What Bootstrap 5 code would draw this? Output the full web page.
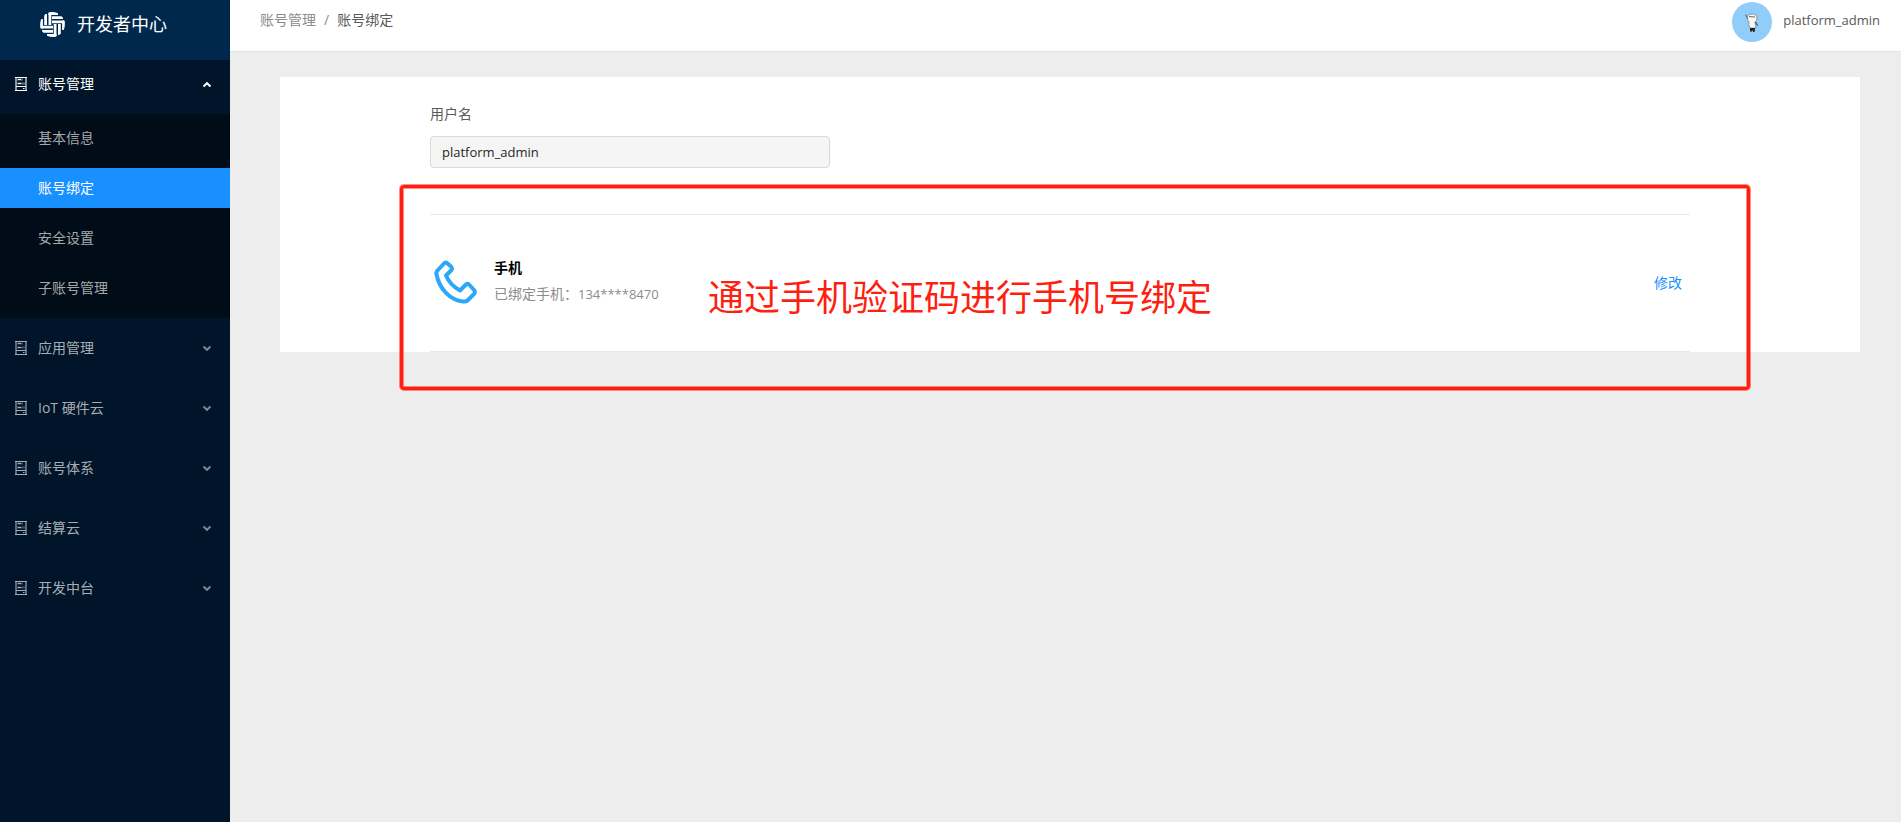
<!DOCTYPE html>
<html lang="zh-CN">
<head>
<meta charset="utf-8">
<meta name="viewport" content="width=device-width, initial-scale=1">
<title>账号绑定 - 开发者中心</title>
<link href="https://cdn.jsdelivr.net/npm/bootstrap@5.3.0/dist/css/bootstrap.min.css" rel="stylesheet">
<style>
body{font-family:"Open Sans","Noto Sans CJK SC",sans-serif;font-size:14px;line-height:20px;background:#ededed;color:#595959}
a{text-decoration:none}
.sidebar{width:230px;background:#001529}
.brand{height:60px;padding:4px 0 16px 40px;gap:12px;background:#00284d;color:#fff;font-size:18px}
.menu{padding-top:4px}
.menu-title{height:40px;margin-bottom:20px;padding:0 18px 0 15px;gap:11px;border:0;background:none;color:#a6adb4;text-align:left}
.menu-title.open{margin-bottom:10px;color:#fff}
.submenu{padding:4px 0 10px;margin-bottom:10px;background:#000c17}
.submenu a{height:40px;padding-left:38px;color:#a6a9ac}
.submenu a+a{margin-top:10px}
.submenu a.active{background:#1890ff;color:#fff}
.topbar{height:52px;padding:0 21px 0 30px;border-bottom:1px solid #e4e4e4}
.topbar .breadcrumb{--bs-breadcrumb-item-padding-x:8px;--bs-breadcrumb-divider-color:#8c8c8c;margin:10px 0 0}
.breadcrumb a{color:#8c8c8c}
.breadcrumb .active{color:#595959}
.user{gap:11px;margin-top:2px;color:#595959}
.user span{font-size:13px;margin-bottom:4px}
.panel{margin:25px 41px 0 50px;padding:27px 170px 0 150px}
.field{width:400px;height:32px;padding:5px 11px;font-size:13px;line-height:20px;border-color:#d9d9d9;border-radius:4px;color:#262626}
.field:disabled{background:#f5f5f5}
.binding{margin-top:46px;height:138px;padding-right:8px;gap:12px;border:solid #e8e8e8;border-width:1px 0}
.binding strong{color:#000;line-height:22px}
.binding small{font-size:14px;line-height:22px;color:#8c8c8c;margin:4px 0}
.binding small span{font-size:13px}
.binding a{color:#1890ff}
.outline-box{inset:-30px -60px -39px -30px;border:3px solid #ff1f10;border-radius:4px;box-shadow:0 0 0 1px #ff1f1080,inset 0 0 0 1px #ff1f1080;pointer-events:none}
.note{left:278px;top:63px;font-size:36px;line-height:40px;color:#ff1f10;white-space:nowrap}
</style>
</head>
<body>
<svg class="d-none" xmlns="http://www.w3.org/2000/svg">
  <symbol id="server" viewBox="0 0 12 14"><path d="M1 0v14M11 0v14" stroke="currentColor" stroke-width="2" opacity=".55"/><path d="M0 .5h12M1 9.500h10M0 13.500h12" stroke="currentColor" fill="none"/><path d="M2 2.500h6M2 6.500h8" stroke="currentColor" stroke-width="2" opacity=".4"/><path d="M3 2.500h3M3 6.500h3M8 11.500h1.500" stroke="currentColor"/></symbol>
  <symbol id="down" viewBox="0 0 10 7"><path d="M1.500 1.500 5 4.800 8.500 1.500" fill="none" stroke="currentColor" stroke-width="2"/></symbol>
  <symbol id="up" viewBox="0 0 10 7"><path d="M1.500 5.500 5 2.200 8.500 5.500" fill="none" stroke="currentColor" stroke-width="2"/></symbol>
</svg>
<div class="d-flex min-vh-100">
  <aside class="sidebar flex-shrink-0">
    <div class="brand d-flex align-items-center">
      <svg width="25" height="25" viewBox="0 0 25 25"><defs><clipPath id="disc"><circle cx="12.500" cy="12.500" r="12.400"/></clipPath><path id="weave" d="M8.500 1.500H18M12 5.600H23M12 9.900H25"/></defs><g clip-path="url(#disc)" fill="none" stroke="#fff" stroke-width="2.800"><use href="#weave"/><use href="#weave" transform="rotate(90 12.500 12.500)"/><use href="#weave" transform="rotate(180 12.500 12.500)"/><use href="#weave" transform="rotate(270 12.500 12.500)"/></g></svg>
      <span>开发者中心</span>
    </div>
    <nav class="menu">
      <button class="menu-title open d-flex align-items-center w-100" type="button" data-bs-toggle="collapse" data-bs-target="#account" aria-expanded="true"><svg width="12" height="14"><use href="#server"/></svg><span class="flex-grow-1">账号管理</span><svg width="10" height="7"><use href="#up"/></svg></button>
      <div class="submenu collapse show" id="account">
        <a class="d-flex align-items-center" href="#">基本信息</a>
        <a class="d-flex align-items-center active" href="#" aria-current="page">账号绑定</a>
        <a class="d-flex align-items-center" href="#">安全设置</a>
        <a class="d-flex align-items-center" href="#">子账号管理</a>
      </div>
      <button class="menu-title d-flex align-items-center w-100" type="button"><svg width="12" height="14"><use href="#server"/></svg><span class="flex-grow-1">应用管理</span><svg width="10" height="7" opacity=".75"><use href="#down"/></svg></button>
      <button class="menu-title d-flex align-items-center w-100" type="button"><svg width="12" height="14"><use href="#server"/></svg><span class="flex-grow-1">IoT 硬件云</span><svg width="10" height="7" opacity=".75"><use href="#down"/></svg></button>
      <button class="menu-title d-flex align-items-center w-100" type="button"><svg width="12" height="14"><use href="#server"/></svg><span class="flex-grow-1">账号体系</span><svg width="10" height="7" opacity=".75"><use href="#down"/></svg></button>
      <button class="menu-title d-flex align-items-center w-100" type="button"><svg width="12" height="14"><use href="#server"/></svg><span class="flex-grow-1">结算云</span><svg width="10" height="7" opacity=".75"><use href="#down"/></svg></button>
      <button class="menu-title d-flex align-items-center w-100" type="button"><svg width="12" height="14"><use href="#server"/></svg><span class="flex-grow-1">开发中台</span><svg width="10" height="7" opacity=".75"><use href="#down"/></svg></button>
    </nav>
  </aside>
  <div class="flex-grow-1">
    <header class="topbar bg-white d-flex justify-content-between align-items-start">
      <nav aria-label="breadcrumb">
        <ol class="breadcrumb">
          <li class="breadcrumb-item"><a href="#">账号管理</a></li>
          <li class="breadcrumb-item active" aria-current="page">账号绑定</li>
        </ol>
      </nav>
      <a class="user d-flex align-items-center" href="#">
        <svg width="40" height="40" viewBox="0 0 40 40"><circle cx="20" cy="20" r="20" fill="#91cdfb"/><path d="M15 15q1-3 5-3 5 0 5 4 0 3-2 4l1 6h-6q-2-3-1-6-2-2-2-5z" fill="#f7f7f5" stroke="#777" stroke-width=".7"/><path d="M13.500 12.500 16 17M17 14.500l6 .5M23 20l3 4M24 20l1 3" stroke="#555" stroke-width=".9" fill="none"/><path d="M18 26h5v1l-.5 3H21v-2l-1 1.500h-2z" fill="#222"/></svg>
        <span>platform_admin</span>
      </a>
    </header>
    <main class="panel bg-white">
      <label class="d-block mb-2 pb-1" for="username">用户名</label>
      <input class="field form-control" id="username" type="text" value="platform_admin" disabled>
      <section class="binding d-flex align-items-center position-relative">
        <svg width="52" height="52" viewBox="0 0 52 52" fill="none" stroke="#2da7fa" stroke-width="4" stroke-linejoin="round"><path d="M14 6.500 7.500 13.500q-1.500 1.500-1 4C9.500 32 20 43 33 44.500q3 .5 5-1.500l6.500-6.500q1-1.500 0-3L39 27.500q-1.500-1.500-3 0L30 33.500Q20 28 16 18.500l5.500-5.500q1-1.500 0-3L17 6q-1.500-1-3 .5z"/></svg>
        <div class="d-flex flex-column flex-grow-1"><strong>手机</strong><small>已绑定手机：<span>134****8470</span></small></div>
        <a href="#">修改</a>
        <div class="outline-box position-absolute"></div>
        <div class="note position-absolute">通过手机验证码进行手机号绑定</div>
      </section>
    </main>
  </div>
</div>
<script src="https://cdn.jsdelivr.net/npm/bootstrap@5.3.0/dist/js/bootstrap.bundle.min.js"></script>
</body>
</html>
